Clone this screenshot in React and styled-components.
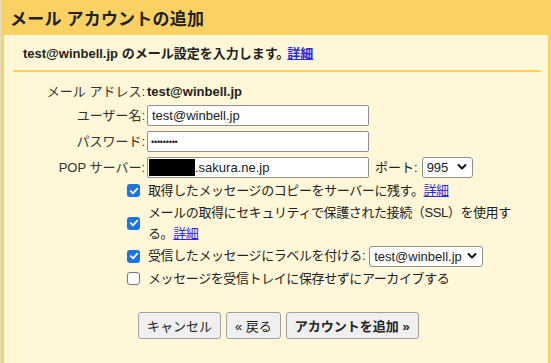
import React from "react";
import styled, { createGlobalStyle } from "styled-components";

const Global = createGlobalStyle`
  html, body { margin: 0; padding: 0; background: #fff; }
  body { font-family: "Liberation Sans", "Noto Sans CJK JP", sans-serif; font-size: 13px; color: #222; }
  * { box-sizing: border-box; }
`;

const Frame = styled.div`
  width: 551px;
  height: 363px;
  display: flex;
  flex-direction: column;
  border-left: 1px solid #e6dcc0;
  overflow: hidden;
`;

const Header = styled.div`
  flex: none;
  height: 35px;
  background: #fad163;
  display: flex;
  align-items: center;
  padding-left: 9px;
  font-size: 17px;
  font-weight: bold;
  color: #222;
  letter-spacing: 0.2px;
`;

const Body = styled.div`
  flex: 1;
  min-height: 0;
  background: #fff7d7;
  border-left: 3px solid #fad163;
  border-right: 3px solid #fad163;
  padding: 0 7px 0 9px;
  display: flex;
  flex-direction: column;
`;

const Intro = styled.div`
  padding: 10px 0 8px 10px;
  font-weight: bold;
  font-size: 13px;
  line-height: 17px;
  border-bottom: 2px solid #fad163;
`;

const Link = styled.a`
  color: #2a2ae0;
  text-decoration: underline;
  font-weight: normal;
  cursor: pointer;
  margin-left: ${(p) => p.$gap || 0}px;
`;

const BoldLink = styled(Link)`
  font-weight: bold;
`;

const Form = styled.div`
  display: grid;
  grid-template-columns: 132px auto 1fr;
  column-gap: 2px;
  row-gap: 5px;
  align-items: center;
  padding-top: 11px;
  line-height: 17px;
`;

const Label = styled.div`
  text-align: right;
  color: #333;
  white-space: nowrap;
`;

const Value = styled.div`
  font-weight: bold;
  grid-column: 2 / 4;
  height: 16px;
  display: flex;
  align-items: center;
`;

const Input = styled.input`
  width: 222px;
  height: 21px;
  border: 1px solid #8f8f8f;
  border-radius: 2px;
  background: #fff;
  font-family: inherit;
  font-size: 13px;
  padding: 0 4px;
  color: #222;
  outline: none;
`;

const Password = styled(Input)`
  font-size: 9px;
  letter-spacing: -0.2px;
  padding-left: 3px;
`;

const FakeInput = styled.div`
  width: 222px;
  height: 21px;
  border: 1px solid #8f8f8f;
  border-radius: 2px;
  background: #fff;
  display: flex;
  align-items: center;
  padding: 0 1px;
`;

const Redacted = styled.span`
  display: inline-block;
  width: 46px;
  height: 17px;
  background: #000;
`;

const Port = styled.div`
  display: flex;
  align-items: center;
  gap: 4px;
  padding-left: 4px;
`;

const SelectWrap = styled.span`
  position: relative;
  display: inline-flex;
  vertical-align: middle;
  margin-left: ${(p) => p.$ml || 0}px;
`;

const Select = styled.select`
  appearance: none;
  -webkit-appearance: none;
  height: 21px;
  width: ${(p) => p.$w}px;
  border: 1px solid #8f8f8f;
  border-radius: 3px;
  background: #fff;
  font-family: inherit;
  font-size: 13px;
  letter-spacing: 0;
  color: #222;
  padding: 0 0 0 4px;
  outline: none;
`;

const Chevron = styled.svg`
  position: absolute;
  right: 6px;
  top: 6px;
  pointer-events: none;
`;

const Options = styled.div`
  display: flex;
  flex-direction: column;
  padding-left: 114px;
  margin-top: 2px;
  gap: 1px;
`;

const OptRow = styled.label`
  display: flex;
  align-items: center;
  gap: 8px;
  min-height: ${(p) => (p.$tall ? 42 : 21)}px;
  line-height: 21px;
`;

const OptText = styled.div`
  color: #222;
  white-space: nowrap;
  letter-spacing: -0.4px;
`;

const Check = styled.span`
  flex: none;
  width: 13px;
  height: 13px;
  border-radius: 3px;
  background: ${(p) => (p.$on ? "#1a73e8" : "#fff")};
  border: ${(p) => (p.$on ? "none" : "1px solid #767676")};
  display: inline-flex;
  align-items: center;
  justify-content: center;
`;

const Buttons = styled.div`
  display: flex;
  gap: 5px;
  padding-left: 125px;
  margin-top: 23px;
`;

const Button = styled.button`
  height: 27px;
  padding: 0 8px;
  border: 1px solid #a0a0a0;
  border-radius: 3px;
  background: #efefef;
  font-family: inherit;
  font-size: 13px;
  font-weight: ${(p) => (p.$bold ? "bold" : "normal")};
  color: #222;
  cursor: pointer;
`;

function CheckBox({ on }) {
  return (
    <Check $on={on}>
      {on && (
        <svg width="10" height="10" viewBox="0 0 10 10">
          <path d="M1.8 5.2 L4 7.3 L8.3 2.6" fill="none" stroke="#fff" strokeWidth="1.8" strokeLinecap="round" strokeLinejoin="round" />
        </svg>
      )}
    </Check>
  );
}

function ChevronIcon() {
  return (
    <Chevron width="10" height="8" viewBox="0 0 10 8">
      <path d="M1.5 2 L5 5.5 L8.5 2" fill="none" stroke="#111" strokeWidth="2" strokeLinecap="round" strokeLinejoin="round" />
    </Chevron>
  );
}

export default function App() {
  return (
    <>
      <Global />
      <Frame>
        <Header>メール アカウントの追加</Header>
        <Body>
          <Intro>
            test@winbell.jp のメール設定を入力します。<BoldLink $gap={-2}>詳細</BoldLink>
          </Intro>
          <Form>
            <Label>メール アドレス:</Label>
            <Value>test@winbell.jp</Value>
            <Label>ユーザー名:</Label>
            <Input defaultValue="test@winbell.jp" />
            <span />
            <Label>パスワード:</Label>
            <Password type="password" defaultValue="123456789" />
            <span />
            <Label>POP サーバー:</Label>
            <FakeInput>
              <Redacted />
              <span>.sakura.ne.jp</span>
            </FakeInput>
            <Port>
              <span>ポート:</span>
              <SelectWrap>
                <Select $w={51} defaultValue="995">
                  <option>995</option>
                  <option>110</option>
                </Select>
                <ChevronIcon />
              </SelectWrap>
            </Port>
          </Form>
          <Options>
            <OptRow>
              <CheckBox on />
              <OptText>
                取得したメッセージのコピーをサーバーに残す。<Link>詳細</Link>
              </OptText>
            </OptRow>
            <OptRow $tall>
              <CheckBox on />
              <OptText>
                メールの取得にセキュリティで保護された接続（SSL）を使用す
                <br />
                る。<Link>詳細</Link>
              </OptText>
            </OptRow>
            <OptRow>
              <CheckBox on />
              <OptText>
                受信したメッセージにラベルを付ける:
                <SelectWrap $ml={4}>
                  <Select $w={114} defaultValue="a">
                    <option value="a">test@winbell.jp</option>
                  </Select>
                  <ChevronIcon />
                </SelectWrap>
              </OptText>
            </OptRow>
            <OptRow>
              <CheckBox />
              <OptText>メッセージを受信トレイに保存せずにアーカイブする</OptText>
            </OptRow>
          </Options>
          <Buttons>
            <Button>キャンセル</Button>
            <Button>« 戻る</Button>
            <Button $bold>アカウントを追加 »</Button>
          </Buttons>
        </Body>
      </Frame>
    </>
  );
}
